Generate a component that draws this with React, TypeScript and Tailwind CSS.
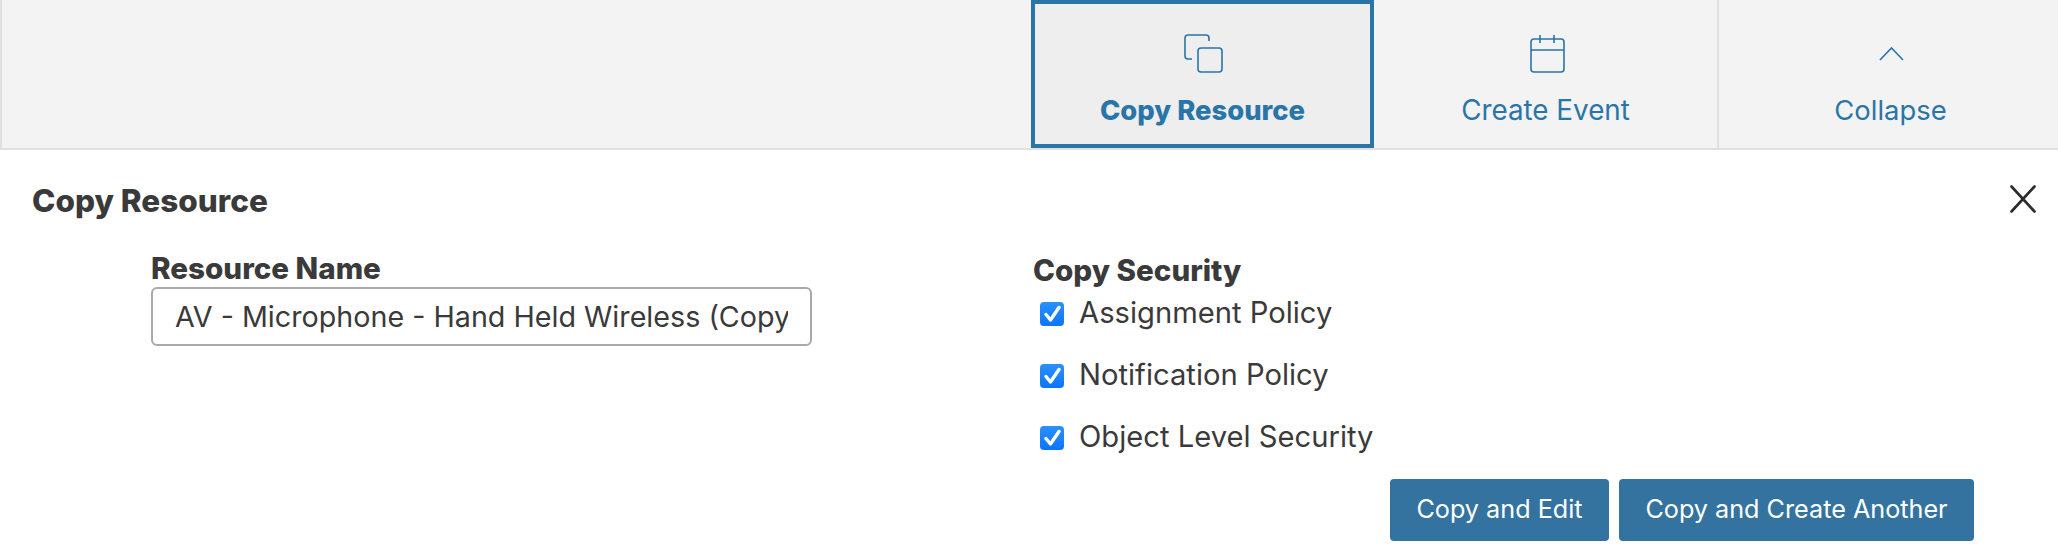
import React from "react";

const font = { fontFamily: "Inter, 'Noto Sans', sans-serif" };

function CopyIcon() {
  return (
    <svg width="40" height="40" viewBox="0 0 40 40" fill="none" stroke="#2a75a8" strokeWidth="1.6">
      <path d="M9 25H5a3 3 0 0 1-3-3V4a3 3 0 0 1 3-3h18a3 3 0 0 1 3 3v3" />
      <rect x="15" y="14" width="24" height="24" rx="3" />
    </svg>
  );
}

function CalendarIcon() {
  return (
    <svg width="40" height="40" viewBox="0 0 40 40" fill="none" stroke="#2a75a8" strokeWidth="1.6">
      <rect x="5" y="5" width="33" height="33" rx="3" />
      <path d="M5 16h33M14 1v8M28 1v8" />
    </svg>
  );
}

function ChevronIcon() {
  return (
    <svg width="40" height="40" viewBox="0 0 40 40" fill="none" stroke="#2a75a8" strokeWidth="1.6">
      <path d="M9 26 20.5 14 32 26" />
    </svg>
  );
}

function Tab({ icon, label, className }: { icon: React.ReactNode; label: string; className: string }) {
  return (
    <button className={"flex h-full flex-col items-center text-[#2a75a8] leading-[34px] " + className}>
      <span className="h-[40px]">{icon}</span>
      <span className="mt-[19px]">{label}</span>
    </button>
  );
}

function Check({ label }: { label: string }) {
  return (
    <label className="flex h-[62px] items-start pl-[7px]">
      <span className="mt-[7px] flex h-[24px] w-[24px] items-center justify-center rounded-[4px] bg-gradient-to-b from-[#2a90fd] to-[#0a74fd]">
        <svg width="18" height="18" viewBox="0 0 18 18" fill="none" stroke="#ffffff" strokeWidth="3.4" strokeLinecap="round" strokeLinejoin="round">
          <path d="M3 9.5 7.5 15 16 2.5" />
        </svg>
      </span>
      <span className="ml-[15px] text-[29.2px] leading-[36px] text-[#3a3a3a]">{label}</span>
    </label>
  );
}

export default function App() {
  return (
    <div className="h-[556px] w-full bg-white" style={font}>
      <div className="flex h-[150px] justify-end border-b-2 border-l-2 border-[#e0e0e0] bg-[#f3f3f3]">
        <Tab icon={<CopyIcon />} label="Copy Resource" className="w-[343px] border-4 border-[#2a75a8] bg-[#eeeeee] pt-[30px] text-[27.4px] font-extrabold" />
        <Tab icon={<CalendarIcon />} label="Create Event" className="w-[345px] border-r-2 border-[#e0e0e0] pt-[34px] text-[27.8px]" />
        <Tab icon={<ChevronIcon />} label="Collapse" className="w-[339px] pt-[34px] pl-[4px] text-[27.4px]" />
      </div>
      <div className="relative px-[32px] pt-[33px]">
        <h2 className="text-[31.5px] font-extrabold leading-[36px] text-[#3a3a3a]">Copy Resource</h2>
        <svg className="absolute right-[22px] top-[35px]" width="26" height="28" viewBox="0 0 26 28" fill="none" stroke="#2b2b2b" strokeWidth="2.6" strokeLinecap="round">
          <path d="M1.5 1.5 24.5 26.5M24.5 1.5 1.5 26.5" />
        </svg>
        <div className="mt-[32px] flex">
          <div className="ml-[119px] w-[661px]">
            <div className="text-[29.6px] font-extrabold leading-[34px] text-[#3a3a3a]">Resource Name</div>
            <input
              readOnly
              defaultValue="AV - Microphone - Hand Held Wireless (Copy)"
              className="mt-[2px] h-[59px] w-full rounded-[6px] border-2 border-[#a9a9a9] bg-white px-[22px] text-[28.7px] text-[#3a3a3a]"
            />
          </div>
          <div className="ml-[221px] pt-[2px]">
            <div className="mb-[8px] text-[29.6px] font-extrabold leading-[34px] text-[#3a3a3a]">Copy Security</div>
            <Check label="Assignment Policy" />
            <Check label="Notification Policy" />
            <Check label="Object Level Security" />
          </div>
        </div>
        <div className="mt-[-2px] flex justify-end gap-[10px] pr-[52px]">
          <button className="h-[62px] w-[219px] rounded-[4px] bg-[#3473a0] text-[25.2px] text-white">Copy and Edit</button>
          <button className="h-[62px] w-[355px] rounded-[4px] bg-[#3473a0] text-[25.2px] text-white">Copy and Create Another</button>
        </div>
      </div>
    </div>
  );
}
